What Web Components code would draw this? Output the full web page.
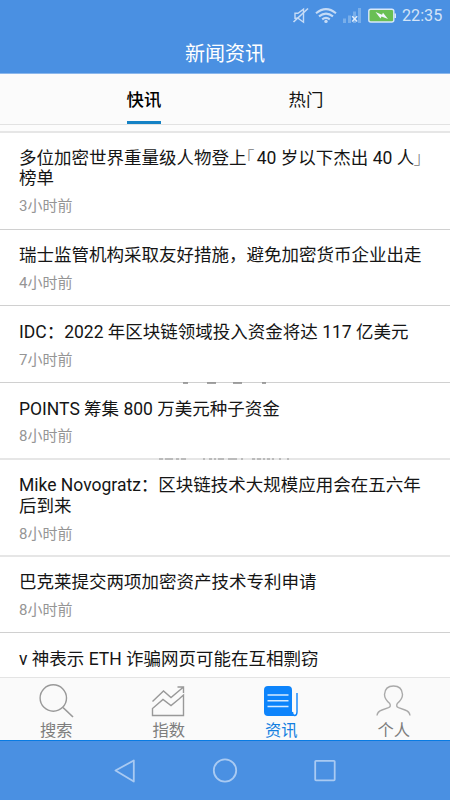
<!DOCTYPE html>
<html lang="zh-CN">
<head>
<meta charset="utf-8">
<meta name="viewport" content="width=device-width, initial-scale=1">
<title>新闻资讯</title>
<style>
  body {
    margin: 0;
    background: #fff;
    font-family: Roboto, "Noto Sans CJK SC", sans-serif;
  }
</style>
</head>
<body>
<news-app>
  <status-bar slot="top" time="22:35"></status-bar>
  <title-bar slot="top">新闻资讯</title-bar>
  <tab-bar slot="top">
    <tab-item active>快讯</tab-item>
    <tab-item>热门</tab-item>
  </tab-bar>

  <news-item time="3小时前" line="soft">多位加密世界重量级人物登上<corner-mark side="open">「</corner-mark> 40 岁以下杰出 40 人<corner-mark>」</corner-mark>榜单</news-item>
  <news-item time="4小时前">瑞士监管机构采取友好措施，避免加密货币企业出走</news-item>
  <news-item time="7小时前">IDC：2022 年区块链领域投入资金将达 117 亿美元</news-item>
  <news-item time="8小时前" marks="dashes">POINTS 筹集 800 万美元种子资金</news-item>
  <news-item time="8小时前" line="soft" marks="caption">Mike Novogratz：区块链技术大规模应用会在五六年后到来</news-item>
  <news-item time="8小时前" line="soft">巴克莱提交两项加密资产技术专利申请</news-item>
  <news-item time="">v 神表示 ETH 诈骗网页可能在互相剽窃</news-item>

  <bottom-tab slot="tabs" icon="search">搜索</bottom-tab>
  <bottom-tab slot="tabs" icon="chart">指数</bottom-tab>
  <bottom-tab slot="tabs" icon="news" active>资讯</bottom-tab>
  <bottom-tab slot="tabs" icon="user">个人</bottom-tab>
  <system-nav slot="system"></system-nav>
</news-app>

<script>
class NewsApp extends HTMLElement {
  constructor() {
    super();
    this.attachShadow({ mode: 'open' }).innerHTML = `
      <style>
        :host {
          display: flex;
          flex-direction: column;
          width: 450px;
          height: 800px;
          overflow: hidden;
        }
        main {
          flex: 1;
          min-height: 0;
          overflow: hidden;
          padding-top: 6.4px;
          background: #fcfcfc;
        }
        nav {
          display: grid;
          grid-template-columns: repeat(4, 1fr);
          flex: none;
          height: 62px;
          border-top: 1px solid #e4e4e4;
          background: #fafafa;
        }
      </style>
      <slot name="top"></slot>
      <main><slot></slot></main>
      <nav><slot name="tabs"></slot></nav>
      <slot name="system"></slot>
    `;
  }
}

class StatusBar extends HTMLElement {
  constructor() {
    super();
    this.attachShadow({ mode: 'open' });
  }

  connectedCallback() {
    this.shadowRoot.innerHTML = `
      <style>
        :host {
          display: flex;
          flex: none;
          align-items: center;
          justify-content: flex-end;
          height: 32px;
          padding-right: 8px;
          background: #4a90e2;
          color: #d3e4f8;
        }
        svg {
          display: block;
          margin-right: 6px;
        }
        span {
          font-size: 16.2px;
          line-height: 32px;
          width: 40px;
        }
      </style>
      <svg width="104" height="20" viewBox="292 6 104 20" fill="none" stroke="#c5dbf6">
        <path d="M295 13.2h3l5.5-4v13l-5.5-4h-3z" stroke-width="1.4"/>
        <path d="M293.5 22L308 8.5" stroke-width="1.7"/>
        <path d="M316 13.2Q326 5 336 13.2M319 16.4Q326 10.8 333 16.4M322.2 19.3Q326 16.5 329.8 19.3" stroke-width="2.1"/>
        <circle cx="326" cy="21.4" r="1.7" fill="#c5dbf6" stroke="none"/>
        <path d="M343 18.5h3v4.5h-3zM348 15.5h3v7.5h-3zM353 11.5h3v11.5h-3zM358 8h3v15h-3z" fill="#78aeea" stroke="none"/>
        <path d="M352.2 16.2l5 5.2M357.2 16.2l-5 5.2" stroke="#e1edfb" stroke-width="1.4"/>
        <rect x="368.8" y="9.3" width="25" height="12.7" rx="2" fill="#69bf54" stroke="#d9e8f9" stroke-width="1.4"/>
        <path d="M395.2 13.5v4.5" stroke="#d9e8f9" stroke-width="1.6"/>
        <path d="M375.5 12l6.5 2.8 1-2 5 6.2-6.5-2.6-1 2z" fill="#f2f7ff" stroke="none"/>
      </svg>
      <span>${this.getAttribute('time')}</span>
    `;
  }
}

class TitleBar extends HTMLElement {
  constructor() {
    super();
    this.attachShadow({ mode: 'open' }).innerHTML = `
      <style>
        :host {
          box-sizing: border-box;
          display: block;
          flex: none;
          height: 42px;
          padding-top: 2px;
          border-bottom: 1px solid #8bb7ec;
          background: #4a90e2;
          color: #fff;
          font-size: 20px;
          line-height: 41px;
          text-align: center;
        }
      </style>
      <slot></slot>
    `;
  }
}

class TabBar extends HTMLElement {
  constructor() {
    super();
    this.attachShadow({ mode: 'open' }).innerHTML = `
      <style>
        :host {
          display: grid;
          grid-template-columns: 1fr 1fr;
          flex: none;
          height: 50px;
          padding: 0 63px;
          border-bottom: 1px solid #e2e2e2;
          background: #fbfbfb;
        }
      </style>
      <slot></slot>
    `;
  }
}

class TabItem extends HTMLElement {
  constructor() {
    super();
    this.attachShadow({ mode: 'open' }).innerHTML = `
      <style>
        :host {
          display: flex;
          justify-content: center;
        }
        span {
          box-sizing: border-box;
          height: 50px;
          border-bottom: 3px solid transparent;
          color: #111;
          font-size: 17.4px;
          line-height: 53px;
        }
        :host([active]) span {
          border-color: #1582c5;
          color: #000;
          font-weight: 500;
        }
      </style>
      <span><slot></slot></span>
    `;
  }
}

const MARKS = {
  dashes: '<path d="M183 1h5M207 1h9M233 1h9M262 1h4" stroke="#888" stroke-width="1.5"/>',
  caption: '<path d="M159 1h4M165 1h8M176 1h3M181 1h5M203 1h2M209 1h3M214 1h2M218 1h6M228 1h9M241 1h2M252 1h3M257 1h4M263 1h2M267 1h3M272 1h2M279 1h2M287 1h2" stroke="#bbb" stroke-width="2"/>',
};

class NewsItem extends HTMLElement {
  constructor() {
    super();
    this.attachShadow({ mode: 'open' });
  }

  connectedCallback() {
    const marks = MARKS[this.getAttribute('marks')] || '';
    this.shadowRoot.innerHTML = `
      <style>
        :host {
          display: block;
          background: #fff;
        }
        .line {
          height: 1px;
          background: #d0d0d0;
        }
        :host([line="soft"]) .line {
          height: 2px;
          margin: -1px 0 0;
          background: #e6e6e6;
        }
        :host(:first-of-type) .line {
          margin: 0 0 -1px;
        }
        svg {
          display: block;
        }
        article {
          padding: 15.6px 19px 12.2px;
        }
        h2 {
          margin: 0;
          margin-right: -4px;
          color: #151515;
          font-size: 17.5px;
          font-weight: 400;
          line-height: 20.5px;
        }
        time {
          display: block;
          margin-top: 7.4px;
          height: 20px;
          color: #959595;
          font-size: 15px;
          line-height: 20px;
        }
      </style>
      <div class="line"><svg width="450" height="2" viewBox="0 0 450 2">${marks}</svg></div>
      <article>
        <h2><slot></slot></h2>
        <time>${this.getAttribute('time')}</time>
      </article>
    `;
  }
}

class CornerMark extends HTMLElement {
  constructor() {
    super();
    this.attachShadow({ mode: 'open' }).innerHTML = `
      <style>
        :host {
          display: inline;
          color: #777;
          font-weight: 300;
          font-feature-settings: "halt";
          margin-left: -5px;
        }
        :host([side="open"]) {
          margin-right: -2px;
        }
      </style>
      <slot></slot>
    `;
  }
}

const ICONS = {
  search: '<circle cx="14.3" cy="15" r="13.2"/><path d="M24 24.5L34 34" stroke-width="1.7"/>',
  chart: '<path d="M1.5 18.5L12.5 8l7.5 6.5L32.5 4M26.5 4h6v6M1.5 32.5v-7L12 16.5l8 6L28 16l4.5-4v20.5z"/>',
  news: '<path d="M4 3h20q4 0 4 4v21q0 3 2 5H4q-4 0-4-4V7q0-4 4-4z" fill="#0d84fb" stroke="none"/><path d="M28.5 29q0 3.5 2.2 3.5T33 29V10" stroke="#0d84fb"/><path d="M3.5 12h21M3.5 17.7h21M3.5 23.5h21" stroke="#d6eaff"/>',
  user: '<path d="M1 32.5q.5-4 5-5.5l6.5-2.3q3-1.2 1-4.5Q8.5 16 8.5 11.5 9 3 17.500 3T26.5 11.5q0 4.5-5 8.7-2 3.3 1 4.5L29 27q4.5 1.5 5 5.5" stroke="#aaa"/>',
};

class BottomTab extends HTMLElement {
  constructor() {
    super();
    this.attachShadow({ mode: 'open' });
  }

  connectedCallback() {
    this.shadowRoot.innerHTML = `
      <style>
        :host {
          display: flex;
          flex-direction: column;
          align-items: center;
          padding-top: 5px;
          color: #7d7d7d;
          font-size: 16.3px;
          line-height: 24px;
        }
        :host([active]) {
          color: #147fe0;
        }
        svg {
          flex: none;
        }
      </style>
      <svg width="35" height="36" viewBox="0 0 35 36" fill="none" stroke="#999" stroke-width="1.4">${ICONS[this.getAttribute('icon')]}</svg>
      <span><slot></slot></span>
    `;
  }
}

class SystemNav extends HTMLElement {
  constructor() {
    super();
    this.attachShadow({ mode: 'open' }).innerHTML = `
      <style>
        :host {
          box-sizing: border-box;
          display: flex;
          flex: none;
          align-items: center;
          justify-content: center;
          gap: 74px;
          height: 60px;
          border-top: 1px solid #087be3;
          background: #4a90e2;
        }
        svg {
          fill: none;
          stroke: #a9caf2;
          stroke-width: 1.8;
          stroke-linejoin: round;
        }
      </style>
      <svg width="26" height="26"><path d="M3.5 12.5L21.8 2.5v21z"/></svg>
      <svg width="26" height="26"><circle cx="13" cy="12.5" r="11.2"/></svg>
      <svg width="26" height="26"><rect x="3.2" y="2.8" width="19.5" height="19.5" rx=".8"/></svg>
    `;
  }
}

customElements.define('news-app', NewsApp);
customElements.define('status-bar', StatusBar);
customElements.define('title-bar', TitleBar);
customElements.define('tab-bar', TabBar);
customElements.define('tab-item', TabItem);
customElements.define('news-item', NewsItem);
customElements.define('corner-mark', CornerMark);
customElements.define('bottom-tab', BottomTab);
customElements.define('system-nav', SystemNav);
</script>
</body>
</html>
